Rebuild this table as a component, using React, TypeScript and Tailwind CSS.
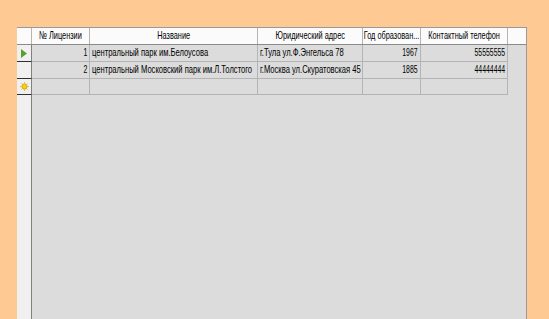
const cols = [58, 168, 105, 58, 87];

const rows = [
  { id: "1", name: "центральный парк им.Белоусова", addr: "г.Тула ул.Ф.Энгельса 78", year: "1967", phone: "55555555" },
  { id: "2", name: "центральный Московский парк им.Л.Толстого", addr: "г.Москва ул.Скуратовская 45", year: "1885", phone: "44444444" },
];

function Sel({ mark }: { mark?: "cur" | "new" }) {
  return (
    <div className="w-[15px] shrink-0 bg-[#f0f0f0] border-b border-b-[#303030] border-r border-r-[#808080] flex items-center justify-center">
      {mark === "cur" && (
        <svg width="6" height="9" viewBox="0 0 6 9">
          <path d="M0 0 L6 4.5 L0 9 Z" fill="#5aa02c" />
        </svg>
      )}
      {mark === "new" && (
        <svg width="9" height="9" viewBox="0 0 9 9">
          <circle cx="4.5" cy="4.5" r="2.6" fill="#f5d020" stroke="#c89a00" strokeWidth="0.8" />
          <path d="M4.5 0v1.5M4.5 7.5V9M0 4.5h1.5M7.5 4.5H9M1.3 1.3l1 1M6.7 6.7l1 1M1.3 7.7l1-1M6.7 2.3l1-1" stroke="#e0b000" strokeWidth="0.8" />
        </svg>
      )}
    </div>
  );
}

function Cell({ w, children, num }: { w: number; children?: React.ReactNode; num?: boolean }) {
  return (
    <div
      style={{ width: w }}
      className={`shrink-0 border-r border-b border-[#b4b4b4] px-[2px] flex items-center overflow-hidden whitespace-nowrap ${num ? "justify-end" : "justify-start"}`}
    >
      {children !== undefined &&
        (num ? (
          <span className="inline-block shrink-0 origin-right scale-x-[0.6]">{children}</span>
        ) : (
          <span className="inline-block shrink-0 origin-left scale-x-[0.66]">{children}</span>
        ))}
    </div>
  );
}

export default function App() {
  const headers = ["№ Лицензии", "Название", "Юридический адрес", "Год образован...", "Контактный телефон"];
  return (
    <div
      className="w-[549px] h-[319px] bg-[#ffc993] pl-[17px] pt-[27px] overflow-hidden text-[11.5px] text-black leading-none"
      style={{ fontFamily: '"Liberation Sans", Arial, sans-serif' }}
    >
      <div className="w-[510px] h-[292px] bg-[#dcdcdc] border-t border-r border-[#9a9a9a] flex flex-col">
        <div className="flex h-[17px] bg-[#fbfbfb] border-b border-[#8a8a8a]">
          <div className="w-[15px] shrink-0 border-r border-[#b4b4b4]" />
          {headers.map((h, i) => (
            <div
              key={h}
              style={{ width: cols[i] }}
              className="shrink-0 border-r border-[#b4b4b4] flex items-center justify-center whitespace-nowrap overflow-hidden text-black"
            >
              <span className="inline-block shrink-0 origin-center scale-x-[0.64]">{h}</span>
            </div>
          ))}
          <div className="flex-1" />
        </div>
        {rows.map((r, i) => (
          <div key={r.id} className="flex h-[17px]">
            <Sel mark={i === 0 ? "cur" : undefined} />
            <Cell w={cols[0]} num>{r.id}</Cell>
            <Cell w={cols[1]}>{r.name}</Cell>
            <Cell w={cols[2]}>{r.addr}</Cell>
            <Cell w={cols[3]} num>{r.year}</Cell>
            <Cell w={cols[4]} num>{r.phone}</Cell>
          </div>
        ))}
        <div className="flex h-[16px]">
          <Sel mark="new" />
          {cols.map((w, i) => (
            <Cell key={i} w={w} />
          ))}
        </div>
        <div className="flex-1 flex">
          <div className="w-[15px] shrink-0 bg-[#f0f0f0] border-r border-[#808080]" />
        </div>
      </div>
    </div>
  );
}
